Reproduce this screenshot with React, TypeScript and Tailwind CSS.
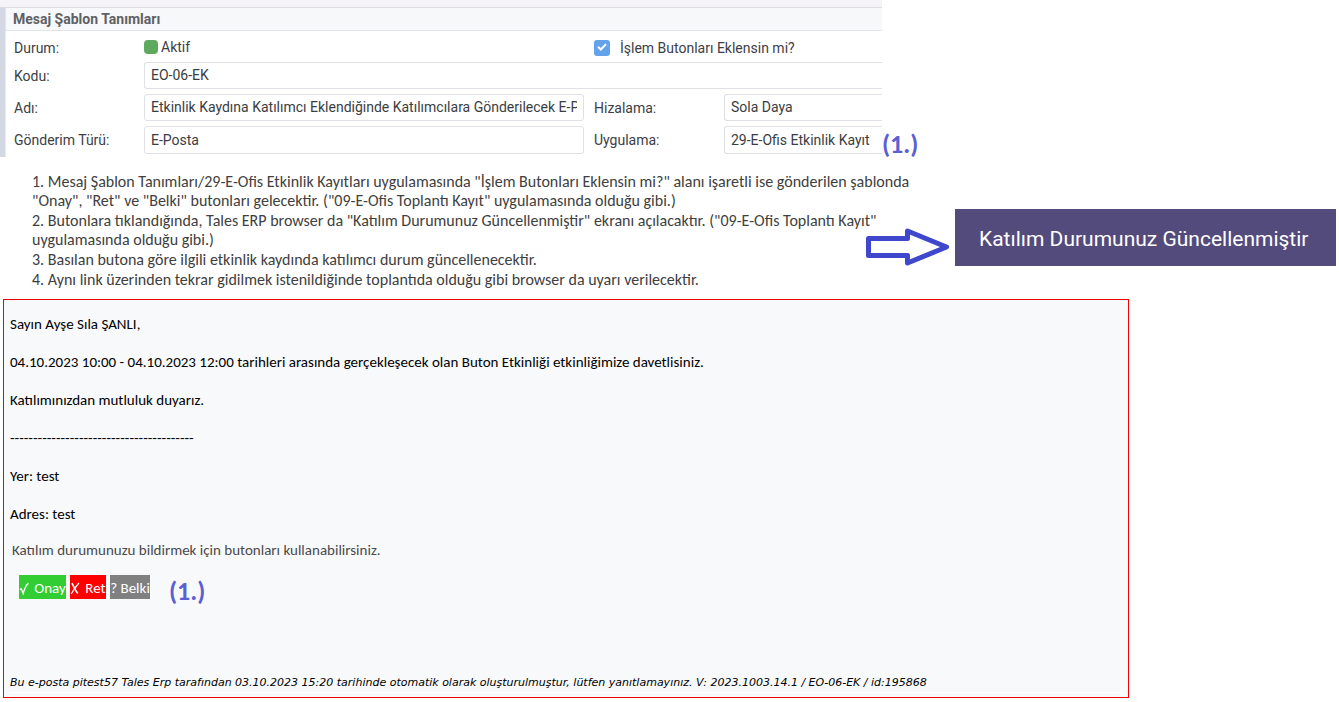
import type { ReactNode } from 'react';

const label = 'flex items-center text-sm text-[#3d4045]';
const field =
  'w-full min-w-0 appearance-none border border-[#dfe1e6] bg-white px-1.5 text-sm text-[#3a3d42] outline-none';

function Marker({ children }: { children: ReactNode }) {
  return (
    <span className="font-['Carlito','Lato',sans-serif] text-[26px] leading-[26px] font-bold text-[#5a60d2]">
      {children}
    </span>
  );
}

function TemplateForm() {
  return (
    <section className="min-w-0 flex-1 font-['Roboto',sans-serif]">
      <div className="h-[7px] bg-[#f6f3f7]" />
      <div className="border-t border-l-[5px] border-t-[#dddde1] border-l-[#d4d8e3]">
        <h1 className="flex h-[23px] items-center border-b border-l border-[#e1e4e9] bg-[#f7f8fa] pl-[7px] text-sm font-bold text-[#5f6165]">
          Mesaj Şablon Tanımları
        </h1>
        <form className="grid grid-cols-[130px_1fr_130px_158px] gap-y-[5px] border-l border-[#e8eaee] pb-[3px] pl-2">
          <span className={`${label} h-[26px] pt-2`}>Durum:</span>
          <span className="flex h-[26px] items-center gap-[3px] pt-1.5 text-sm text-[#3d4045]">
            <span className="size-3.5 rounded bg-[#5fa85f]" />
            Aktif
          </span>
          <label className={`${label} col-span-2 h-[26px] gap-2.5 pt-2`}>
            <span className="relative flex size-4">
              <input type="checkbox" defaultChecked className="size-4 appearance-none rounded-[3px] bg-[#64a3ea]" />
              <svg viewBox="0 0 16 16" className="pointer-events-none absolute inset-0 size-4" aria-hidden="true">
                <path d="M4 6.8 L6.8 9.5 L12 4.2" fill="none" stroke="white" strokeWidth="2" />
              </svg>
            </span>
            İşlem Butonları Eklensin mi?
          </label>

          <label htmlFor="kodu" className={label}>Kodu:</label>
          <input id="kodu" defaultValue="EO-06-EK" className={`${field} col-span-3 h-[27px] rounded-l-[3px] border-r-0 pb-px`} />

          <label htmlFor="adi" className={label}>Adı:</label>
          <div className="pr-2.5">
            <input
              id="adi"
              defaultValue="Etkinlik Kaydına Katılımcı Eklendiğinde Katılımcılara Gönderilecek E-Posta"
              className={`${field} h-[27px] rounded-[3px] pb-px`}
            />
          </div>
          <label htmlFor="hizalama" className={label}>Hizalama:</label>
          <select id="hizalama" className={`${field} h-[27px] rounded-l-[3px] border-r-0 pb-px`}>
            <option>Sola Daya</option>
          </select>

          <label htmlFor="tur" className={label}>Gönderim Türü:</label>
          <div className="pr-2.5">
            <select id="tur" className={`${field} h-7 rounded-[3px]`}>
              <option>E-Posta</option>
            </select>
          </div>
          <label htmlFor="uygulama" className={label}>Uygulama:</label>
          <select id="uygulama" className={`${field} h-7 rounded-l-[3px] border-r-0`}>
            <option>29-E-Ofis Etkinlik Kayıt</option>
          </select>
        </form>
      </div>
    </section>
  );
}

function Notes() {
  return (
    <ol className="flex min-w-0 flex-1 flex-col gap-px pt-[15px] pl-8 font-['Carlito','Lato',sans-serif] text-base leading-[19px] whitespace-nowrap text-[#404040]">
      <li>
        1. Mesaj Şablon Tanımları/29-E-Ofis Etkinlik Kayıtları uygulamasında "İşlem Butonları Eklensin mi?" alanı
        işaretli ise gönderilen şablonda
        <br />
        "Onay", "Ret" ve "Belki" butonları gelecektir. ("09-E-Ofis Toplantı Kayıt" uygulamasında olduğu gibi.)
      </li>
      <li>
        2. Butonlara tıklandığında, Tales ERP browser da "Katılım Durumunuz Güncellenmiştir" ekranı açılacaktır.
        ("09-E-Ofis Toplantı Kayıt"
        <br />
        uygulamasında olduğu gibi.)
      </li>
      <li>3. Basılan butona göre ilgili etkinlik kaydında katılımcı durum güncellenecektir.</li>
      <li>4. Aynı link üzerinden tekrar gidilmek istenildiğinde toplantıda olduğu gibi browser da uyarı verilecektir.</li>
    </ol>
  );
}

function Banner() {
  return (
    <div className="relative mt-[52px] mr-[3px] flex h-[57px] w-[381px] shrink-0 items-center bg-[#544b7d] pt-1 pl-6 font-['Roboto',sans-serif] text-[21px] text-white">
      <svg viewBox="0 0 83 38" className="absolute top-[19px] right-full mr-1.5 h-[38px] w-[83px]" aria-hidden="true">
        <path
          d="M2.5 10.5 H41.5 V3 L80.5 19 L41.5 35 V27.5 H2.5 Z"
          fill="white"
          stroke="#3f48cc"
          strokeWidth="5"
          strokeLinejoin="round"
        />
      </svg>
      Katılım Durumunuz Güncellenmiştir
    </div>
  );
}

function CheckMark() {
  return (
    <svg viewBox="0 0 10 13" className="h-[13px] w-2.5" fill="none" stroke="white" aria-hidden="true">
      <path d="M0.8 7.6 L2.2 6.8 L4.2 11.6 C5.2 7.6 7 3.6 9.4 1" strokeWidth="1.3" />
    </svg>
  );
}

function CrossMark() {
  return (
    <svg viewBox="0 0 10 13" className="h-[13px] w-2.5" fill="none" stroke="white" aria-hidden="true">
      <path d="M2 1.2 C3.4 4 5.4 8.6 7.8 11.6" strokeWidth="1.6" />
      <path d="M9 1 C6.4 4 3.4 8 1.2 12" strokeWidth="1.2" />
    </svg>
  );
}

const action = 'flex h-6 items-center justify-center gap-[5px] whitespace-nowrap pt-0.5';

function Message() {
  return (
    <article className="mt-2.5 mr-[210px] ml-[3px] border border-[#f00000] bg-[#f8f9fb] px-1.5 pt-[15px] pb-1 font-['Carlito','Lato',sans-serif] text-[15px] leading-[19px] text-black">
      <div className="flex flex-col gap-[19px]">
        <p>Sayın Ayşe Sıla ŞANLI,</p>
        <p>
          04.10.2023 10:00 - 04.10.2023 12:00 tarihleri arasında gerçekleşecek olan Buton Etkinliği etkinliğimize
          davetlisiniz.
        </p>
        <p>Katılımınızdan mutluluk duyarız.</p>
        <p>----------------------------------------</p>
        <p>Yer: test</p>
        <p>Adres: test</p>
      </div>
      <p className="mt-[17px] pl-0.5 text-[#4a4a4a]">
        Katılım durumunuzu bildirmek için butonları kullanabilirsiniz.
      </p>
      <div className="mt-[15px] flex h-7 gap-1 pl-[9px] text-white">
        <button type="button" className={`${action} w-[47px] bg-[#32cd32]`}><CheckMark />Onay</button>
        <button type="button" className={`${action} w-9 bg-[#ff0000]`}><CrossMark />Ret</button>
        <button type="button" className={`${action} w-10 bg-[#808080]`}>? Belki</button>
        <span className="pt-[3px] pl-[15px]">
          <Marker>(1.)</Marker>
        </span>
      </div>
      <p className="mt-[70px] border-b border-white font-['DejaVu_Sans',sans-serif] text-[11px] leading-[19px] italic">
        Bu e-posta pitest57 Tales Erp tarafından 03.10.2023 15:20 tarihinde otomatik olarak oluşturulmuştur, lütfen
        yanıtlamayınız. V: 2023.1003.14.1 / EO-06-EK / id:195868
      </p>
    </article>
  );
}

export default function App() {
  return (
    <main className="min-h-screen bg-white">
      <div className="flex">
        <TemplateForm />
        <div className="flex w-[457px] shrink-0 items-end">
          <Marker>(1.)</Marker>
        </div>
      </div>
      <div className="flex">
        <Notes />
        <Banner />
      </div>
      <Message />
    </main>
  );
}
